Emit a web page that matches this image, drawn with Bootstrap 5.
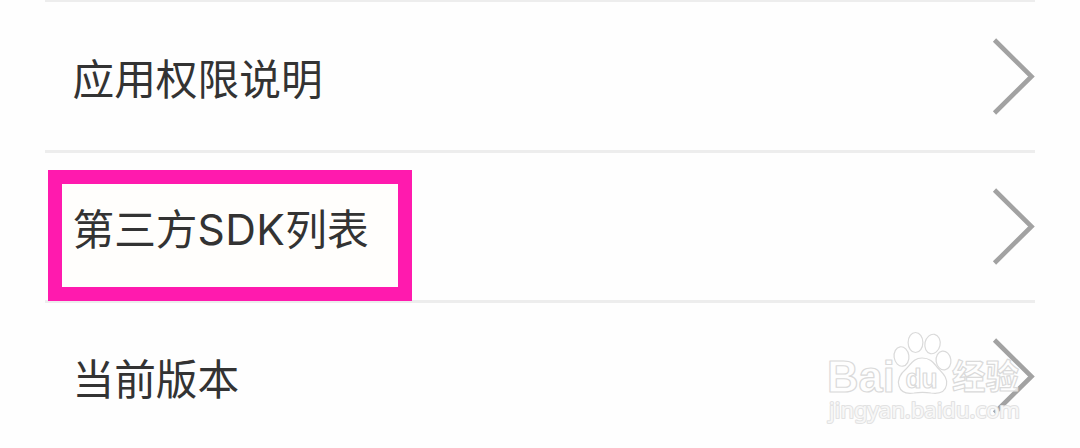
<!DOCTYPE html>
<html lang="zh-CN">
<head>
<meta charset="utf-8">
<meta name="viewport" content="width=device-width, initial-scale=1">
<title>设置</title>
<link href="https://cdn.jsdelivr.net/npm/bootstrap@5.3.0/dist/css/bootstrap.min.css" rel="stylesheet">
<style>
  body { background: #fefefe; color: #333; font-family: Inter, "Noto Sans CJK SC", sans-serif; }
  .screen { height: 448px; padding: 0 45px; }
  .setting-row { height: 150px; padding-left: 27.500px; border-top: 3px solid #ededed; }
  .setting-row:first-child { border-top-width: 2px; padding-top: 1px; }
  .label-text { font-size: 41.7px; line-height: 60px; padding-top: 6px; }
  .latin { font-size: 42.5px; line-height: 1; letter-spacing: .4px; }
  .chevron { width: 44px; height: 80px; }
  .marker { left: 3px; top: 17px; width: 364px; height: 131px; border: 14px solid #ff1aae; background: #fffefc; }
  .brand { left: 820px; top: 320px; }
</style>
</head>
<body>
<main class="screen position-relative overflow-hidden">
  <div class="setting-row d-flex align-items-center justify-content-between">
    <span class="label-text">应用权限说明</span>
    <svg class="chevron" viewBox="0 0 44 80"><path d="M3.500 3 40.500 39.500 3.500 76" fill="none" stroke="#a2a2a2" stroke-width="4.600"/></svg>
  </div>
  <div class="setting-row position-relative d-flex align-items-center justify-content-between">
    <div class="marker position-absolute"></div>
    <span class="label-text position-relative">第三方<span class="latin">SDK</span>列表</span>
    <svg class="chevron" viewBox="0 0 44 80"><path d="M3.500 3 40.500 39.500 3.500 76" fill="none" stroke="#a2a2a2" stroke-width="4.600"/></svg>
  </div>
  <div class="setting-row d-flex align-items-center justify-content-between">
    <span class="label-text">当前版本</span>
    <svg class="chevron" viewBox="0 0 44 80"><path d="M3.500 3 40.500 39.500 3.500 76" fill="none" stroke="#a2a2a2" stroke-width="4.600"/></svg>
  </div>
  <svg class="brand position-absolute" width="230" height="128" viewBox="0 0 230 128">
    <g fill="#fff" fill-opacity=".6" stroke="#dadada" stroke-width="1.200">
      <ellipse cx="81.500" cy="36.500" rx="7.400" ry="9.800" transform="rotate(-8 81.500 36.500)"/>
      <ellipse cx="95.500" cy="22.500" rx="7.400" ry="10"/>
      <ellipse cx="112.500" cy="24" rx="7.600" ry="9.800" transform="rotate(12 112.500 24)"/>
      <ellipse cx="123.500" cy="40.500" rx="7.400" ry="9.500" transform="rotate(-8 123.500 40.500)"/>
      <path d="M102 38C94 38 91 44 86 49C80 54 77 59 79 66C81 73 87 74 94 73C100 72 105 72 111 73C118 74 125 73 126.500 65C128 57 122 53 117 47C113 42 110 38 102 38Z"/>
    </g>
    <g fill="#fff" fill-opacity=".75" stroke="#dadada" stroke-width="1.200" stroke-linejoin="round">
      <text x="7" y="72" font-family="Liberation Sans, sans-serif" font-weight="700" font-size="44" textLength="68" lengthAdjust="spacingAndGlyphs">Bai</text>
      <text x="85.500" y="68" font-family="Liberation Sans, sans-serif" font-weight="700" font-size="27" textLength="32" lengthAdjust="spacingAndGlyphs">du</text>
      <text x="132" y="69" font-family="Noto Sans CJK SC, sans-serif" font-weight="700" font-size="34" textLength="67" lengthAdjust="spacingAndGlyphs">经验</text>
      <text x="9" y="98" font-family="Noto Sans, sans-serif" font-size="21" stroke="#e2e2e2" stroke-width="2" paint-order="stroke" textLength="191" lengthAdjust="spacingAndGlyphs">jingyan.baidu.com</text>
    </g>
  </svg>
</main>
<script src="https://cdn.jsdelivr.net/npm/bootstrap@5.3.0/dist/js/bootstrap.bundle.min.js"></script>
</body>
</html>
